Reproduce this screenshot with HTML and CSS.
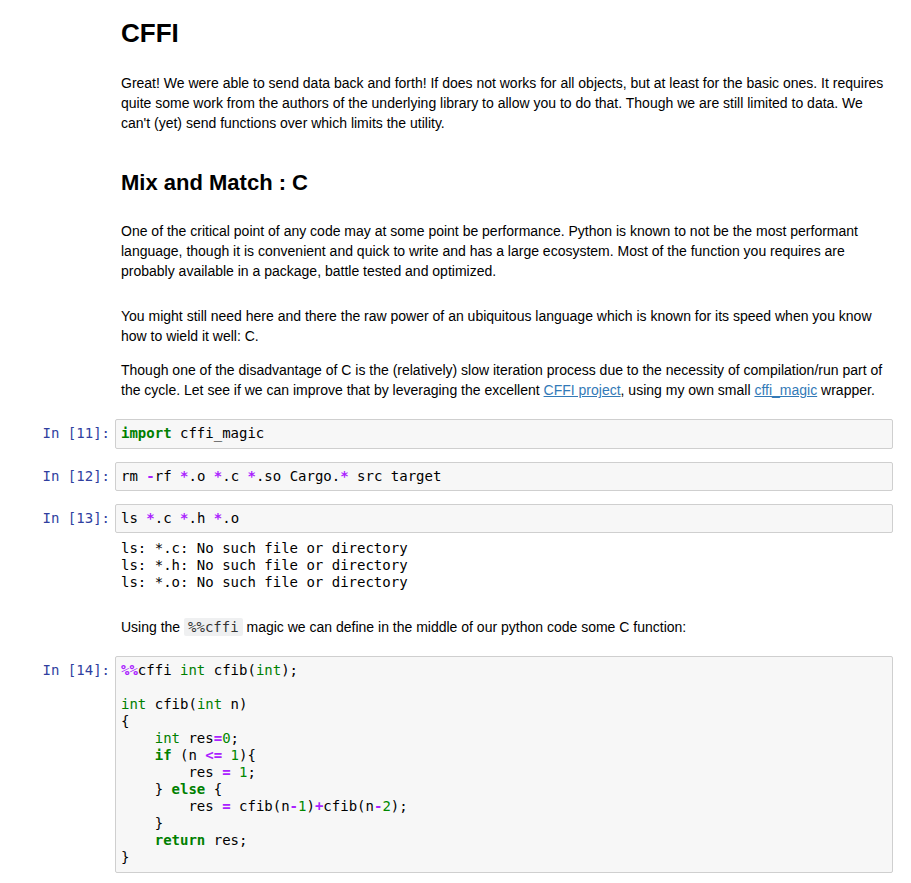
FILE: index.html
```html
<!DOCTYPE html>
<html>
<head>
<meta charset="utf-8">
<link rel="stylesheet" href="styles.css">
</head>
<body>
<div class="nb">
  <div class="text">
    <h1 class="h1">CFFI</h1>
    <p class="p p1">Great! We were able to send data back and forth! If does not works for all objects, but at least for the basic ones. It requires quite some work from the authors of the underlying library to allow you to do that. Though we are still limited to data. We can't (yet) send functions over which limits the utility.</p>
    <h2 class="h2">Mix and Match : C</h2>
    <p class="p p2">One of the critical point of any code may at some point be performance. Python is known to not be the most performant language, though it is convenient and quick to write and has a large ecosystem. Most of the function you requires are probably available in a package, battle tested and optimized.</p>
    <p class="p p3">You might still need here and there the raw power of an ubiquitous language which is known for its speed when you know how to wield it well: C.</p>
    <p class="p p4">Though one of the disadvantage of C is the (relatively) slow iteration process due to the necessity of compilation/run part of the cycle. Let see if we can improve that by leveraging the excellent <a class="link" href="#">CFFI project</a>, using my own small <a class="link" href="#">cffi_magic</a> wrapper.</p>
  </div>

  <div class="cell c11">
    <div class="prompt">In [11]:</div>
    <div class="input"><span class="kw">import</span> cffi_magic</div>
  </div>
  <div class="cell c12">
    <div class="prompt">In [12]:</div>
    <div class="input">rm <span class="op">-</span>rf <span class="op">*</span>.o <span class="op">*</span>.c <span class="op">*</span>.so Cargo.<span class="op">*</span> src target</div>
  </div>
  <div class="cell c13">
    <div class="prompt">In [13]:</div>
    <div class="input">ls <span class="op">*</span>.c <span class="op">*</span>.h <span class="op">*</span>.o</div>
  </div>
  <div class="output">ls: *.c: No such file or directory
ls: *.h: No such file or directory
ls: *.o: No such file or directory</div>

  <div class="text">
    <p class="p p5">Using the <code class="inline">%%cffi</code> magic we can define in the middle of our python code some C function:</p>
  </div>

  <div class="cell c14">
    <div class="prompt">In [14]:</div>
    <div class="input"><span class="op">%%</span>cffi <span class="ty">int</span> cfib(<span class="ty">int</span>);

<span class="ty">int</span> cfib(<span class="ty">int</span> n)
{
    <span class="ty">int</span> res<span class="op">=</span><span class="num">0</span>;
    <span class="kw">if</span> (n <span class="op">&lt;=</span> <span class="num">1</span>){
        res <span class="op">=</span> <span class="num">1</span>;
    } <span class="kw">else</span> {
        res <span class="op">=</span> cfib(n<span class="op">-</span><span class="num">1</span>)<span class="op">+</span>cfib(n<span class="op">-</span><span class="num">2</span>);
    }
    <span class="kw">return</span> res;
}</div>
  </div>
</div>
</body>
</html>
```

FILE: styles.css
```css
html, body {
  margin: 0;
  padding: 0;
  background: #ffffff;
}
body {
  font-family: "Liberation Sans", Arial, sans-serif;
  font-size: 14px;
  line-height: 20px;
  color: #000000;
}
.nb {
  padding: 20px 18px 10px 0;
}
.text {
  margin-left: 115px;
  padding: 0 6px;
}
.h1 {
  margin: 0;
  font-size: 26px;
  line-height: 26px;
  font-weight: bold;
}
.h2 {
  margin: 39px 0 0 0;
  font-size: 22px;
  line-height: 22px;
  font-weight: bold;
}
.p {
  margin: 0;
}
.p1 { margin-top: 26.5px; }
.p2 { margin-top: 27.5px; }
.p3 { margin-top: 25px; }
.p4 { margin-top: 14px; }
.p5 { margin-top: 25.5px; }
.link {
  color: #337ab7;
  text-decoration: underline;
}
.inline {
  font-family: "DejaVu Sans Mono", monospace;
  font-size: 14px;
  background: #eff0f1;
  color: #333333;
  padding: 1px 4px;
  border-radius: 2px;
}
.cell {
  display: flex;
  align-items: flex-start;
  margin-top: 12px;
}
.c11 { margin-top: 19px; }
.c12 { margin-top: 13px; }
.c13 { margin-top: 13px; }
.c14 { margin-top: 19px; }
.prompt {
  flex: none;
  width: 115px;
  box-sizing: border-box;
  padding: 6px 5px 0 0;
  text-align: right;
  font-family: "DejaVu Sans Mono", monospace;
  font-size: 14px;
  line-height: 17px;
  color: #303F9F;
}
.input {
  flex: 1;
  min-width: 0;
  background: #f7f7f7;
  border: 1px solid #cfcfcf;
  border-radius: 2px;
  padding: 5px 5px 6px 5px;
  font-family: "DejaVu Sans Mono", monospace;
  font-size: 14px;
  line-height: 17px;
  white-space: pre;
  color: #000000;
}
.c12 .input,
.c13 .input {
  padding-bottom: 5px;
}
.output {
  margin-left: 115px;
  padding: 7px 6px 0 6px;
  font-family: "DejaVu Sans Mono", monospace;
  font-size: 14px;
  line-height: 17px;
  white-space: pre;
  color: #000000;
}
.kw {
  color: #008000;
  font-weight: bold;
}
.op {
  color: #AA22FF;
  font-weight: bold;
}
.ty {
  color: #008000;
}
.num {
  color: #008800;
}
```
